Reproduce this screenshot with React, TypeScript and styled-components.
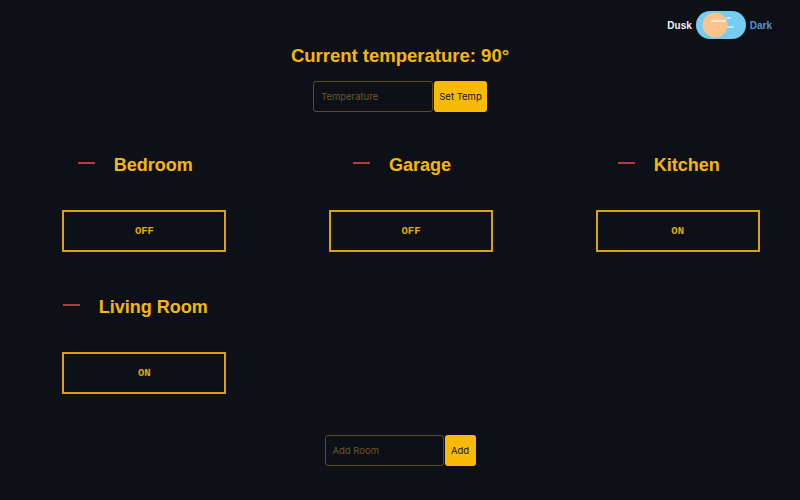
import React from "react";
import styled, { createGlobalStyle } from "styled-components";

const Global = createGlobalStyle`
  html, body { margin: 0; padding: 0; background: #0d1117; }
  body { font-family: "Liberation Sans", Arial, sans-serif; width: 800px; height: 500px; overflow: hidden; }
`;

const Page = styled.div`
  width: 800px;
  height: 500px;
  display: flex;
  flex-direction: column;
  align-items: stretch;
`;

const TopBar = styled.div`
  display: flex;
  justify-content: flex-end;
  align-items: center;
  gap: 4px;
  padding: 11px 28px 0 0;
  height: 28px;
`;

const ModeLabel = styled.span<{ $active?: boolean }>`
  font-family: "Liberation Sans", Arial, sans-serif;
  font-weight: bold;
  font-size: 10px;
  color: ${(p) => (p.$active ? "#5b8fd8" : "#f2f2f2")};
`;

const Title = styled.h1`
  margin: 5px 0 0;
  text-align: center;
  font-family: "Liberation Sans", Arial, sans-serif;
  font-weight: bold;
  font-size: 18.5px;
  line-height: 24px;
  color: #f5b80a;
`;

const FormRow = styled.form<{ $top: number }>`
  display: flex;
  justify-content: center;
  gap: 1px;
  margin: ${(p) => p.$top}px 0 0;
`;

const TextInput = styled.input<{ $w: number }>`
  box-sizing: border-box;
  width: ${(p) => p.$w}px;
  height: 31px;
  background: #0d1117;
  border: 1px solid #5e4b1c;
  border-radius: 3px;
  padding: 0 7px;
  font-family: Inter, "Liberation Sans", sans-serif;
  font-size: 9.5px;
  color: #f5b80a;
  outline: none;
  &::placeholder { color: #6b5628; }
`;

const SubmitButton = styled.button<{ $w: number }>`
  box-sizing: border-box;
  width: ${(p) => p.$w}px;
  height: 31px;
  background: #f7ba08;
  border: none;
  border-radius: 3px;
  font-family: Inter, "Liberation Sans", sans-serif;
  font-size: 9.5px;
  color: #111;
  padding: 0;
`;

const RoomGrid = styled.div`
  display: grid;
  grid-template-columns: repeat(3, 1fr);
  row-gap: 35px;
  margin-top: 33px;
`;

const RoomCell = styled.div`
  display: flex;
  flex-direction: column;
  align-items: center;
  gap: 25px;
`;

const RoomHeader = styled.div`
  height: 40px;
  display: flex;
  align-items: center;
  gap: 19px;
  margin-left: 4px;
`;

const DeleteDash = styled.span`
  width: 17px;
  height: 2px;
  background: #b23b3b;
  margin-bottom: 5px;
`;

const RoomName = styled.h2`
  margin: 0;
  font-family: "Liberation Sans", Arial, sans-serif;
  font-weight: bold;
  font-size: 18px;
  color: #f5b80a;
`;

const PowerBox = styled.button`
  box-sizing: border-box;
  width: 164px;
  height: 42px;
  margin-left: 22px;
  background: transparent;
  border: 2px solid #d9a30f;
  font-family: "Liberation Mono", "Courier New", monospace;
  font-weight: bold;
  font-size: 10.5px;
  color: #e0aa10;
  padding: 0;
`;

const AddRow = styled(FormRow)`
  margin-top: 41px;
`;

function ThemeToggle() {
  return (
    <svg width="50" height="28" viewBox="0 0 50 28">
      <rect x="0" y="0" width="50" height="28" rx="14" fill="#74cdf2" />
      <circle cx="19" cy="14" r="12.5" fill="#fbc48a" />
      <line x1="15" y1="10" x2="30" y2="10" stroke="#ffffff" strokeWidth="1.3" />
      <line x1="30" y1="7" x2="35" y2="7" stroke="#ffffff" strokeWidth="1" />
      <line x1="31" y1="16" x2="38" y2="16" stroke="#ffffff" strokeWidth="1" />
    </svg>
  );
}

const rooms = [
  { name: "Bedroom", on: false },
  { name: "Garage", on: false },
  { name: "Kitchen", on: true },
  { name: "Living Room", on: true },
];

export default function App() {
  return (
    <Page>
      <Global />
      <TopBar>
        <ModeLabel>Dusk</ModeLabel>
        <ThemeToggle />
        <ModeLabel $active>Dark</ModeLabel>
      </TopBar>
      <Title>Current temperature: 90°</Title>
      <FormRow $top={13} onSubmit={(e) => e.preventDefault()}>
        <TextInput $w={120} placeholder="Temperature" />
        <SubmitButton $w={53}>Set Temp</SubmitButton>
      </FormRow>
      <RoomGrid>
        {rooms.map((r) => (
          <RoomCell key={r.name}>
            <RoomHeader>
              <DeleteDash />
              <RoomName>{r.name}</RoomName>
            </RoomHeader>
            <PowerBox>{r.on ? "ON" : "OFF"}</PowerBox>
          </RoomCell>
        ))}
      </RoomGrid>
      <AddRow $top={41} onSubmit={(e) => e.preventDefault()}>
        <TextInput $w={119} placeholder="Add Room" />
        <SubmitButton $w={31}>Add</SubmitButton>
      </AddRow>
    </Page>
  );
}
